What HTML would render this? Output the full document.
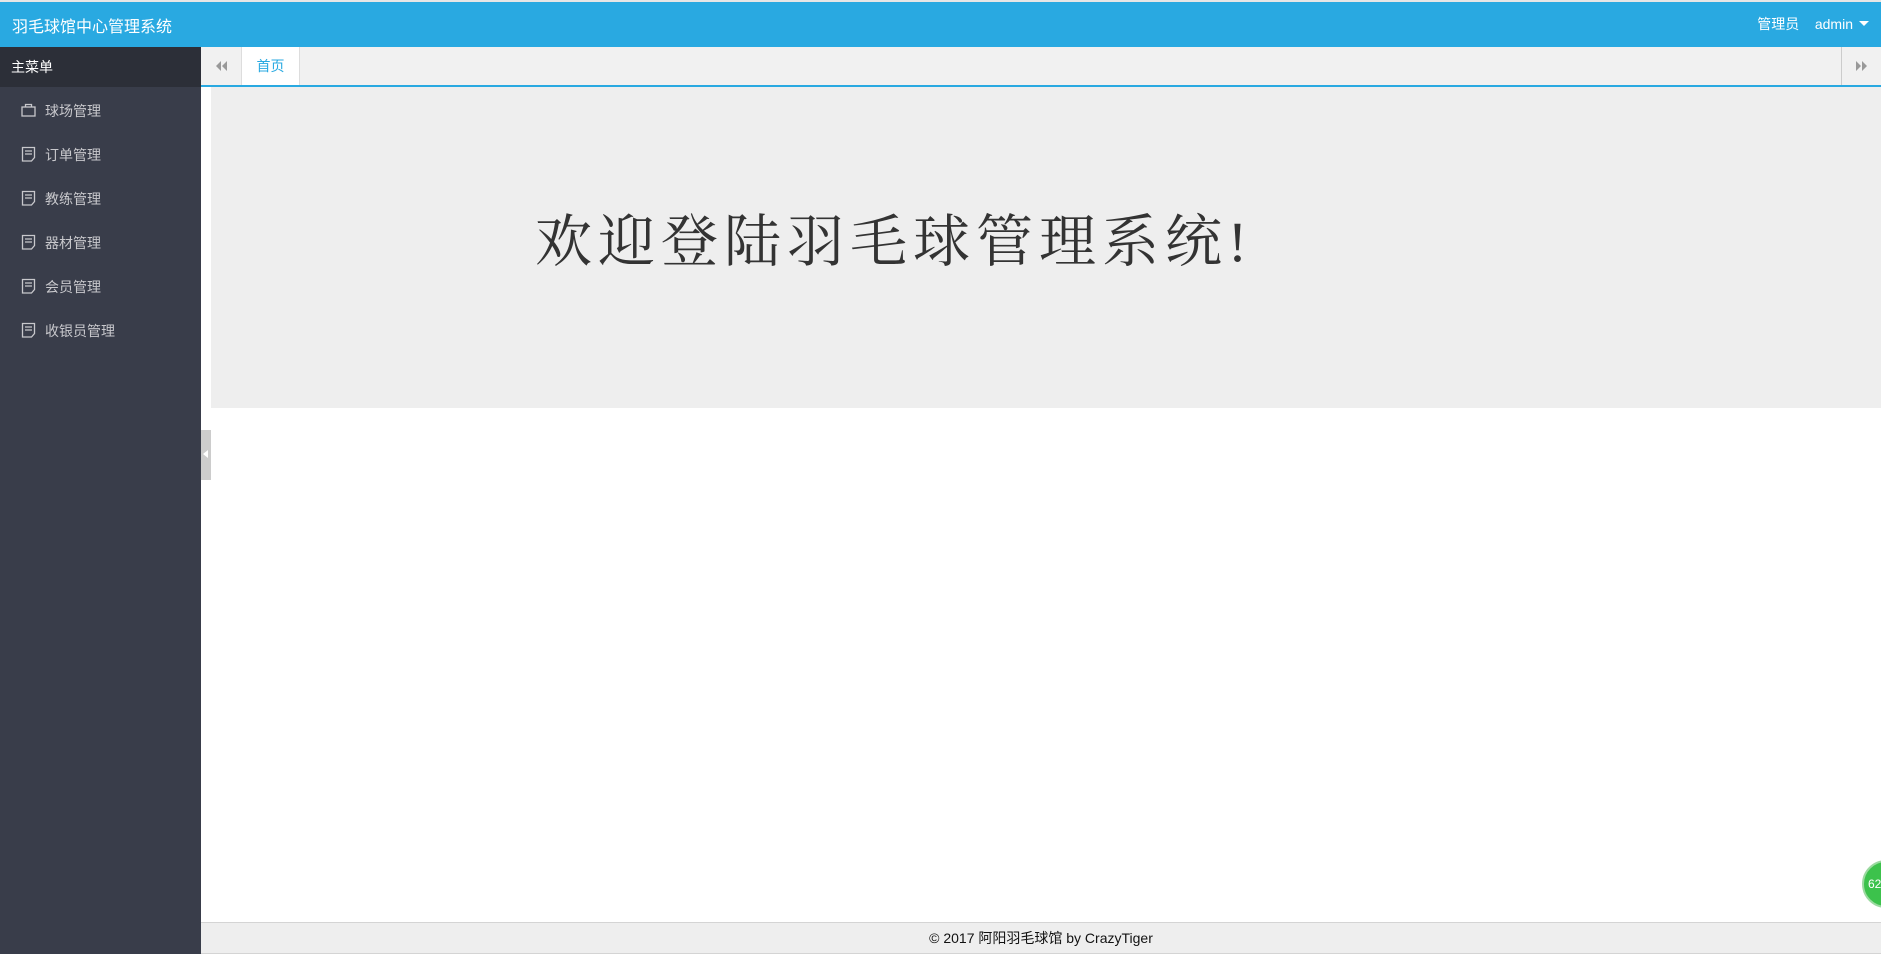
<!DOCTYPE html>
<html><head><meta charset="utf-8"><style>
*{margin:0;padding:0;box-sizing:border-box}
body{width:1881px;height:959px;overflow:hidden;background:#fff;font-family:"Liberation Sans","Noto Sans CJK SC",sans-serif;position:relative}
.top{position:absolute;left:0;top:0;width:1881px;height:2px;background:#e6e6e6}
.hdr{position:absolute;left:0;top:2px;width:1881px;height:45px;background:#29a9e1;color:#fff}
.hdr .t{position:absolute;left:12px;top:11px;font-size:16px}
.hdr .r{position:absolute;right:28px;top:12px;font-size:14px}
.hdr .car{position:absolute;right:12px;top:19px;border-left:5px solid transparent;border-right:5px solid transparent;border-top:5px solid #fff}
.side{position:absolute;left:0;top:47px;width:201px;height:907px;background:#393d4a}
.mh{height:40px;background:#2c2f38;color:#fff;font-size:14px;padding:10px 0 0 11px}
.mi{height:44px;color:#c8c8cc;font-size:14px;position:relative}
.mi span{position:absolute;left:45px;top:12px}
.mi svg{position:absolute;left:21px;top:13px}
.tabs{position:absolute;left:201px;top:47px;width:1680px;height:38px;background:#f1f1f1}
.bl{position:absolute;left:201px;top:85px;width:1680px;height:2px;background:#29a9e1}
.tab{position:absolute;left:40px;top:0;width:59px;height:38px;background:#fff;border-left:1px solid #ddd;border-right:1px solid #ddd;color:#29a9e1;font-size:14px;text-align:center;line-height:38px}
.rb{position:absolute;right:0;top:0;width:40px;height:38px;border-left:1px solid #ccc}
.cont{position:absolute;left:211px;top:87px;width:1670px;height:321px;background:#eee}
.wel{position:absolute;left:535px;top:196px;font-family:"Liberation Serif","Noto Serif CJK SC",serif;font-size:57px;color:#333;white-space:nowrap;letter-spacing:6px}
.hd{position:absolute;left:201px;top:430px;width:10px;height:50px;background:#ccc}
.ft{position:absolute;left:201px;top:922px;width:1680px;height:32px;background:#eee;border-top:1px solid #d4d4d4;border-bottom:1px solid #d4d4d4;text-align:center;font-size:14px;color:#111;line-height:30px}
.ball{position:absolute;left:1862px;top:860px;width:48px;height:48px;border-radius:50%;background:#3cc24c;border:2px solid #9bd9a0;color:#fff;font-size:12px;line-height:44px;padding-left:4px}
</style></head><body>
<div class="top"></div>
<div class="hdr"><div class="t">羽毛球馆中心管理系统</div><div class="r">管理员&nbsp;&nbsp;&nbsp;&nbsp;admin</div><div class="car"></div></div>
<div class="side">
<div class="mh">主菜单</div>
<div style="height:2px"></div>
<div class="mi"><svg width="15" height="15" viewBox="0 0 15 15" fill="none" stroke="#c8c8cc" stroke-width="1.3"><rect x="1" y="5" width="13" height="9"/><path d="M4.5 5V2.5h6V5"/></svg><span>球场管理</span></div>
<div class="mi"><svg width="15" height="16" viewBox="0 0 15 16" fill="none" stroke="#c8c8cc" stroke-width="1.3"><path d="M1.5 15V1.5h12v10l-3 3.5z"/><path d="M4 5h7M4 8h7"/></svg><span>订单管理</span></div>
<div class="mi"><svg width="15" height="16" viewBox="0 0 15 16" fill="none" stroke="#c8c8cc" stroke-width="1.3"><path d="M1.5 15V1.5h12v10l-3 3.5z"/><path d="M4 5h7M4 8h7"/></svg><span>教练管理</span></div>
<div class="mi"><svg width="15" height="16" viewBox="0 0 15 16" fill="none" stroke="#c8c8cc" stroke-width="1.3"><path d="M1.5 15V1.5h12v10l-3 3.5z"/><path d="M4 5h7M4 8h7"/></svg><span>器材管理</span></div>
<div class="mi"><svg width="15" height="16" viewBox="0 0 15 16" fill="none" stroke="#c8c8cc" stroke-width="1.3"><path d="M1.5 15V1.5h12v10l-3 3.5z"/><path d="M4 5h7M4 8h7"/></svg><span>会员管理</span></div>
<div class="mi"><svg width="15" height="16" viewBox="0 0 15 16" fill="none" stroke="#c8c8cc" stroke-width="1.3"><path d="M1.5 15V1.5h12v10l-3 3.5z"/><path d="M4 5h7M4 8h7"/></svg><span>收银员管理</span></div>
</div>
<div class="tabs">
<svg style="position:absolute;left:14px;top:14px" width="12" height="10" viewBox="0 0 12 10"><path d="M6 0L1 5l5 5zM12 0L7 5l5 5z" fill="#999"/></svg>
<div class="tab">首页</div>
<div class="rb"><svg style="position:absolute;left:14px;top:14px" width="12" height="10" viewBox="0 0 12 10"><path d="M0 0l5 5-5 5zM6 0l5 5-5 5z" fill="#999"/></svg></div>
</div>
<div class="bl"></div>
<div class="cont"></div>
<div class="wel">欢迎登陆羽毛球管理系统!</div>
<div class="hd"><svg style="position:absolute;left:2px;top:20px" width="5" height="8" viewBox="0 0 5 8"><path d="M5 0L0 4l5 4z" fill="#fff"/></svg></div>
<div class="ft">© 2017 阿阳羽毛球馆 by CrazyTiger</div>
<div class="ball">62</div>
</body></html>
